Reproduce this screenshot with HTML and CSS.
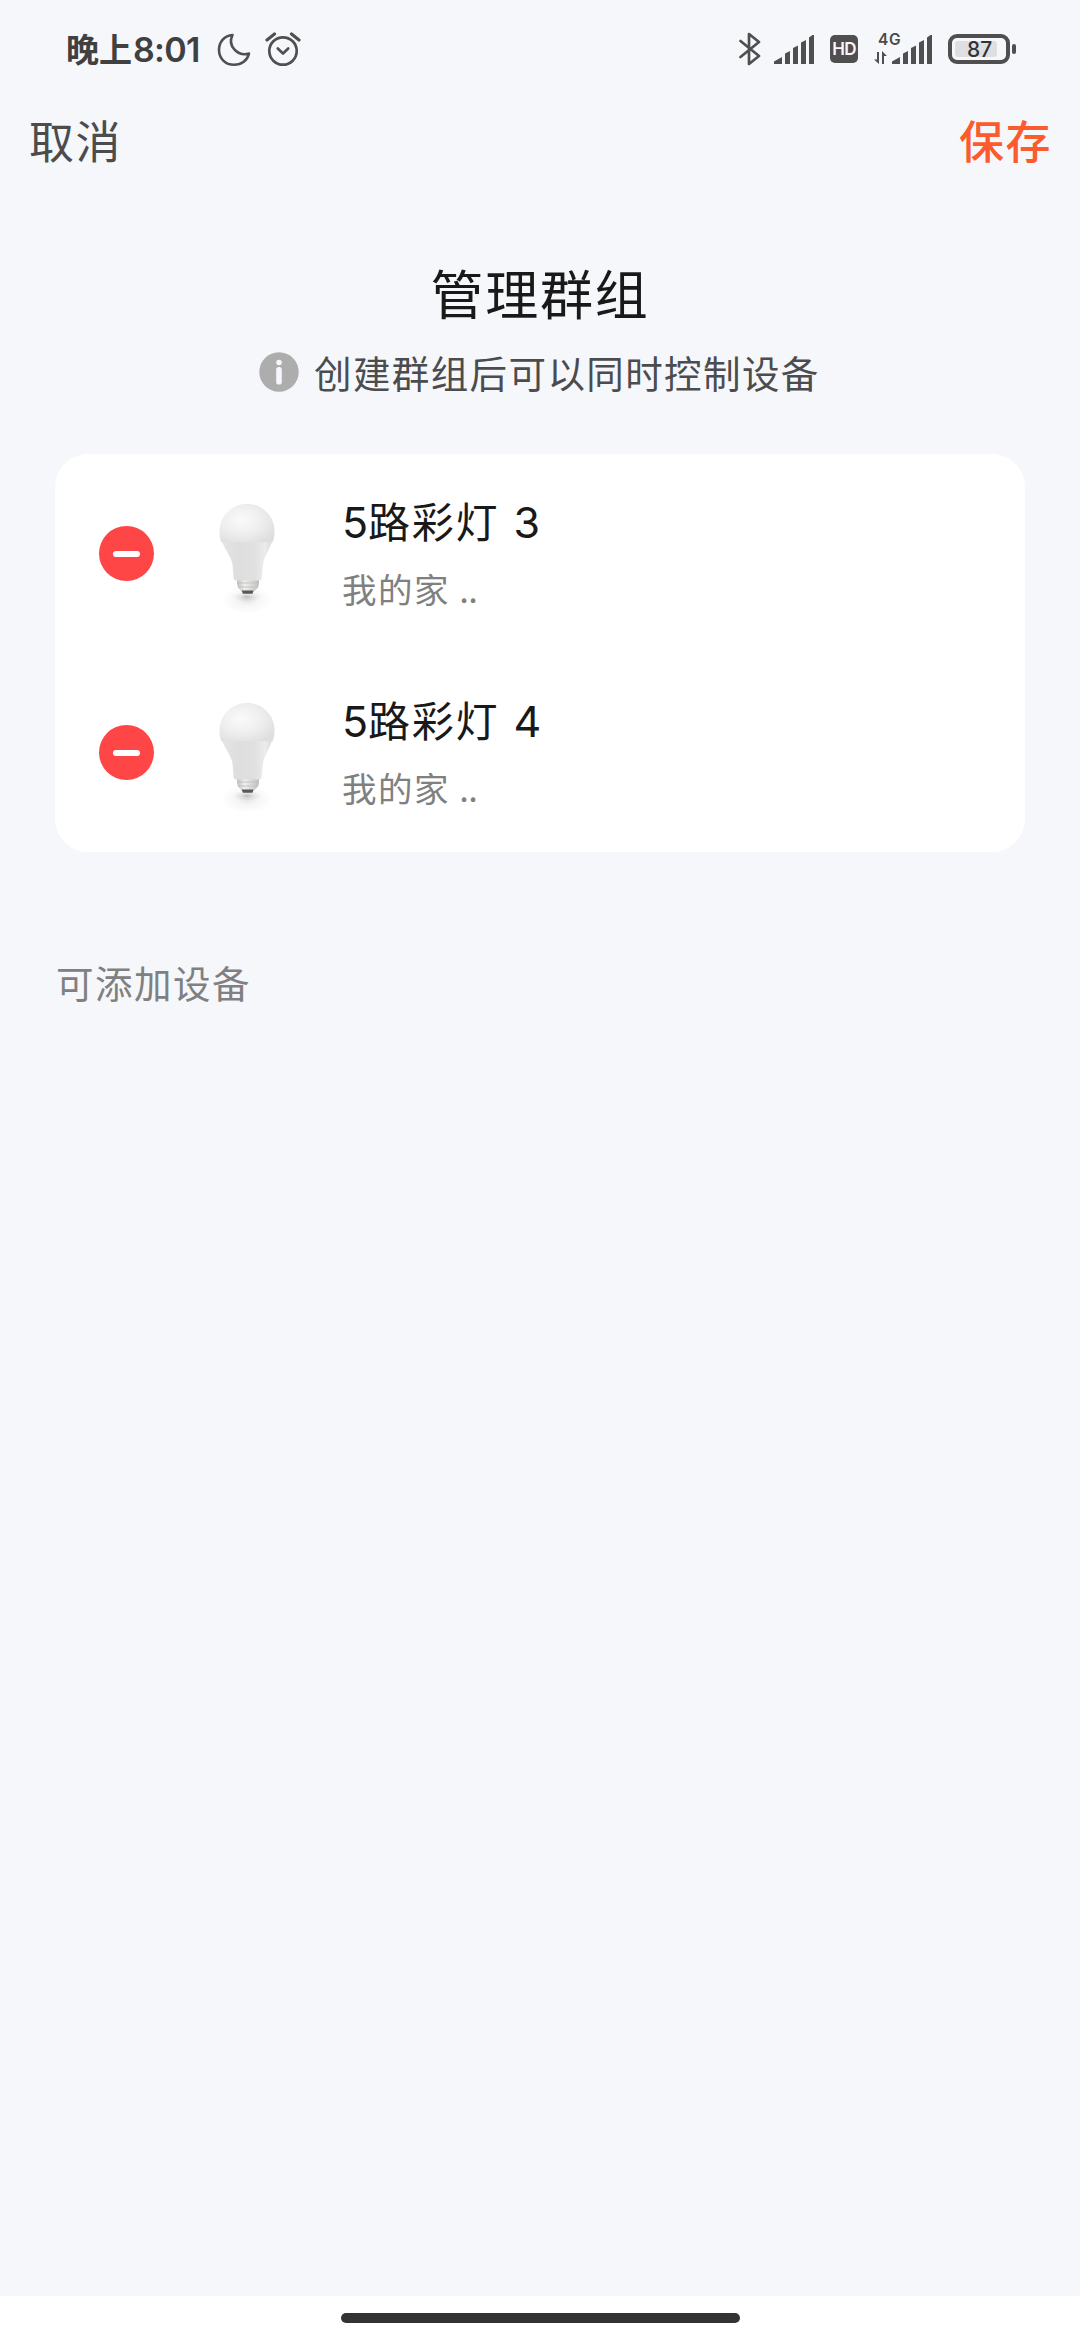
FILE: index.html
```html
<!DOCTYPE html>
<html lang="zh-CN">
<head>
<meta charset="utf-8">
<title>管理群组</title>
<link rel="stylesheet" href="styles.css">
</head>
<body>
<svg class="defs" width="0" height="0" aria-hidden="true">
  <defs>
    <radialGradient id="dome" cx="0.4" cy="0.42" r="0.7">
      <stop offset="0" stop-color="#fafafa"/>
      <stop offset="0.5" stop-color="#efefef"/>
      <stop offset="1" stop-color="#dedede"/>
    </radialGradient>
    <linearGradient id="neck" x1="0" x2="1" y1="0" y2="0">
      <stop offset="0" stop-color="#e6e6e6"/>
      <stop offset="0.3" stop-color="#dedede"/>
      <stop offset="0.65" stop-color="#e0e0e0"/>
      <stop offset="0.85" stop-color="#ececec"/>
      <stop offset="1" stop-color="#dadada"/>
    </linearGradient>
    <linearGradient id="cap" x1="0" x2="1" y1="0" y2="0">
      <stop offset="0" stop-color="#bdbdbd"/>
      <stop offset="0.35" stop-color="#f0f0ee"/>
      <stop offset="0.7" stop-color="#d6d6d4"/>
      <stop offset="1" stop-color="#bcbcbc"/>
    </linearGradient>
    <radialGradient id="shade">
      <stop offset="0" stop-color="#000" stop-opacity="0.2"/>
      <stop offset="0.4" stop-color="#000" stop-opacity="0.07"/>
      <stop offset="1" stop-color="#000" stop-opacity="0"/>
    </radialGradient>
    <symbol id="bulb" viewBox="0 0 110 110" preserveAspectRatio="none">
      <ellipse cx="55" cy="96" rx="26" ry="14" fill="url(#shade)" opacity="0.55"/>
      <ellipse cx="55" cy="93" rx="15" ry="5" fill="url(#shade)"/>
      <path d="M45 76H67V80L66 84L62 88H50L46 84L45 80Z" fill="url(#cap)"/>
      <path d="M45 79.5H67M46 83.5H66" stroke="#c4c4c2" stroke-width="1"/>
      <path d="M49.500 87H61.500L60.500 90.200H51Z" fill="#585858"/>
      <path d="M29.500 37H80.500C78.500 45 72.500 53 71 61L69.500 75Q69.500 77 67.500 77H43.500Q41.500 77 41.500 75L40.500 61C39 53 31.500 45 29.500 37Z" fill="url(#neck)"/>
      <path d="M29.300 39.500C26 31 27 20 33 12.500C39 5.500 46 2 55 2S71 5.500 77 12.500C83 20 84 31 80.700 39.500Z" fill="url(#dome)"/>
    </symbol>
    <symbol id="signal" viewBox="0 0 40 29">
      <path d="M0 29V26.500L8 22V29ZM11 29V18.500L16 16V29ZM19 29V13L24 10.500V29ZM27 29V7.500L32 5V29ZM35 29V2.500L38.500 0H40V29Z" fill="#4f4f50"/>
    </symbol>
  </defs>
</svg>
<div class="screen">
  <div class="status">
    <div class="clock">晚上<span class="digits">8:01</span></div>
    <svg class="moon" viewBox="0 0 34 34"><path d="M15.500 2C7.500 2.500 2 9 2 17C2 25.500 8.500 31.800 17 31.800C24.500 31.800 30.500 27.500 32 20.500C21 24 10 13 15.500 2Z" fill="none" stroke="#505051" stroke-width="2.600" stroke-linejoin="round"/></svg>
    <svg class="alarm" viewBox="0 0 36 36"><g fill="none" stroke="#505051" stroke-width="2.700" stroke-linecap="round" stroke-linejoin="round"><circle cx="18" cy="20" r="13.700"/><path d="M12.800 17.500L18 22.500L23.200 17.500"/><path d="M2 9L9.500 3M26.500 3L34 9" stroke-width="3.200"/></g></svg>
    <div class="spacer"></div>
    <svg class="bluetooth" viewBox="0 0 22 34"><path d="M1.500 9L20 24L10 32V2L20 10L1.500 25" fill="none" stroke="#4f4f50" stroke-width="2.700" stroke-linecap="round" stroke-linejoin="round"/></svg>
    <svg class="signal"><use href="#signal"/></svg>
    <div class="hd">HD</div>
    <div class="net">
      <span class="net-label">4G</span>
      <svg class="arrows" viewBox="0 0 14 14"><path d="M5 1V13L0 8.500H3V1ZM8 13V0L13 5H10V13Z" fill="#4f4f50"/></svg>
    </div>
    <svg class="signal signal-two"><use href="#signal"/></svg>
    <div class="battery"><div class="level">87</div></div>
    <div class="nub"></div>
  </div>
  <div class="nav">
    <div class="cancel">取消</div>
    <div class="save">保存</div>
  </div>
  <h1 class="title">管理群组</h1>
  <div class="hint">
    <svg class="info" viewBox="0 0 40 40"><circle cx="20" cy="20" r="19.700" fill="#adadae"/><circle cx="20" cy="10.500" r="2.800" fill="#f6f7fb"/><rect x="17.200" y="15" width="5.600" height="17.500" rx="2.600" fill="#f6f7fb"/></svg>
    <span>创建群组后可以同时控制设备</span>
  </div>
  <div class="card">
    <div class="row">
      <div class="remove"><div class="dash"></div></div>
      <svg class="bulb"><use href="#bulb"/></svg>
      <div class="info-text">
        <div class="name"><span class="num">5</span>路彩灯 <span class="num index">3</span></div>
        <div class="place">我的家 <span class="dots">..</span></div>
      </div>
    </div>
    <div class="row">
      <div class="remove"><div class="dash"></div></div>
      <svg class="bulb"><use href="#bulb"/></svg>
      <div class="info-text">
        <div class="name"><span class="num">5</span>路彩灯 <span class="num index">4</span></div>
        <div class="place">我的家 <span class="dots">..</span></div>
      </div>
    </div>
  </div>
  <div class="section">可添加设备</div>
  <div class="home"><div class="pill"></div></div>
</div>
</body>
</html>
```
FILE: styles.css
```css
* { box-sizing: border-box; }
body {
  margin: 0;
  font-family: "Noto Sans CJK SC", sans-serif;
  background: #f6f7fb;
}
.defs { position: absolute; }
.screen {
  width: 1080px;
  height: 2340px;
  display: flex;
  flex-direction: column;
  overflow: hidden;
  background: #f6f7fb;
}
svg { display: block; flex: none; }
.status {
  height: 98px;
  flex: none;
  display: flex;
  align-items: center;
  padding: 0 64px 0 66px;
}
.clock {
  width: 151px;
  font-size: 33px;
  line-height: 40px;
  font-weight: 700;
  color: #404040;
  white-space: nowrap;
  margin-top: -2px;
}
.digits {
  font-family: "Inter", sans-serif;
  font-weight: 600;
  font-size: 34px;
  line-height: 1;
  letter-spacing: -0.7px;
  margin-left: 1px;
}
.moon { width: 34px; height: 34px; margin-top: 1px; }
.alarm { width: 36px; height: 36px; margin-left: 14px; }
.spacer { flex: 1; }
.bluetooth { width: 22px; height: 34px; }
.signal { width: 40px; height: 29px; margin-left: 13px; }
.hd {
  width: 28px;
  height: 28px;
  margin-left: 16px;
  border-radius: 5px;
  background: #4f4f50;
  color: #f6f7fb;
  font: 600 17px/29px "Inter", sans-serif;
  letter-spacing: -0.8px;
  text-align: center;
}
.net {
  width: 27px;
  height: 32px;
  margin-left: 16px;
  display: flex;
  flex-direction: column;
  justify-content: space-between;
}
.net-label {
  font: 600 15.500px/13px "Inter", sans-serif;
  letter-spacing: 0.8px;
  color: #4a4a4a;
  margin-left: 4px;
}
.arrows { width: 14px; height: 14px; }
.signal-two { margin-left: -9px; }
.battery {
  width: 62px;
  height: 30px;
  margin-left: 16px;
  border: 4px solid #4f4f50;
  border-radius: 9px;
  padding: 3px;
}
.level {
  width: 42px;
  height: 16px;
  border-radius: 3px;
  background: #dedfe2;
  font: 500 21px/17px "Inter", sans-serif;
  color: #333;
  padding-left: 12px;
}
.nub {
  width: 4px;
  height: 10px;
  margin-left: 2px;
  border-radius: 2px;
  background: #4f4f50;
}
.nav {
  height: 82px;
  flex: none;
  display: flex;
  align-items: center;
  justify-content: space-between;
  padding: 2px 28px 0 29px;
  font-size: 45px;
  line-height: 60px;
  letter-spacing: 1.500px;
}
.cancel { color: #4b4c4e; }
.save { color: #fb5b2d; font-weight: 500; }
.title {
  margin: 72px 0 0;
  font-size: 53px;
  line-height: 80px;
  font-weight: 400;
  letter-spacing: 1.700px;
  text-align: center;
  color: #191919;
}
.hint {
  margin-top: 16px;
  padding-left: 259px;
  display: flex;
  align-items: center;
  font-size: 37.500px;
  line-height: 48px;
  letter-spacing: 1.400px;
  color: #4b4c4e;
}
.info { width: 40px; height: 40px; margin-right: 15px; }
.card {
  margin: 58px 55px 0;
  border-radius: 33px;
  background: #fff;
}
.row {
  height: 199px;
  display: flex;
  align-items: center;
  padding-left: 44px;
}
.remove {
  width: 55px;
  height: 55px;
  border-radius: 50%;
  background: #ff4646;
  display: flex;
  align-items: center;
  justify-content: center;
}
.dash {
  width: 27px;
  height: 6px;
  border-radius: 3px;
  background: #fff;
}
.bulb { width: 110px; height: 112px; margin: 9px 40px 0 38px; }
.name {
  font-size: 42px;
  line-height: 52px;
  letter-spacing: 1.800px;
  color: #191919;
}
.num {
  display: inline-block;
  width: 26px;
  font-family: "Inter", sans-serif;
  font-size: 43px;
  line-height: 1;
  letter-spacing: 0;
}
.index { margin-left: 3px; }
.place {
  margin: 20px 0 3px;
  font-size: 34.500px;
  line-height: 44px;
  letter-spacing: 1.500px;
  color: #808080;
}
.dots { letter-spacing: -0.5px; }
.section {
  margin: 106px 0 0 56px;
  font-size: 37.500px;
  line-height: 48px;
  letter-spacing: 1.500px;
  color: #808080;
}
.home {
  height: 44px;
  margin-top: auto;
  padding-top: 17px;
  background: #fff;
}
.pill {
  width: 399px;
  height: 10px;
  margin: 0 auto;
  border-radius: 5px;
  background: #333;
}
```
